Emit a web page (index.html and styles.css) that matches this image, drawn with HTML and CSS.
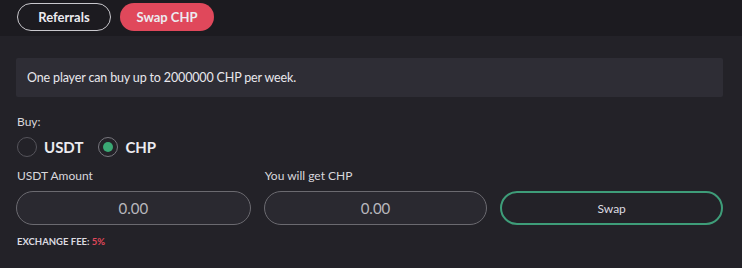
FILE: index.html
```
<!DOCTYPE html>
<html>
<head>
<meta charset="utf-8">
<link rel="stylesheet" href="styles.css">
</head>
<body>
<div class="tabs">
  <button class="tab tab-outline">Referrals</button>
  <button class="tab tab-active">Swap CHP</button>
</div>
<div class="main">
  <div class="notice">One player can buy up to 2000000 CHP per week.</div>
  <div class="buy-label">Buy:</div>
  <div class="radios">
    <label class="radio"><span class="circle"></span><span class="radio-text">USDT</span></label>
    <label class="radio"><span class="circle checked"><span class="dot"></span></span><span class="radio-text">CHP</span></label>
  </div>
  <div class="row">
    <div class="field">
      <div class="field-label">USDT Amount</div>
      <div class="input">0.00</div>
    </div>
    <div class="field">
      <div class="field-label">You will get CHP</div>
      <div class="input">0.00</div>
    </div>
    <div class="field">
      <div class="field-label">&nbsp;</div>
      <div class="swap">Swap</div>
    </div>
  </div>
  <div class="fee">EXCHANGE FEE: <span class="fee-val">5%</span></div>
</div>
</body>
</html>
```
FILE: styles.css
```
html, body {
  margin: 0;
  padding: 0;
  background: #232228;
  font-family: Lato, "Noto Sans", sans-serif;
  color: #e4e3e8;
  width: 742px;
  height: 268px;
  overflow: hidden;
}
.tabs {
  background: #1c1b20;
  height: 36px;
  box-sizing: border-box;
  padding: 3px 0 0 17px;
  display: flex;
  gap: 9px;
}
.tab {
  width: 94px;
  height: 28px;
  border-radius: 14px;
  font-family: inherit;
  font-size: 13px;
  font-weight: 700;
  color: #ecebf0;
  box-sizing: border-box;
  cursor: pointer;
}
.tab-outline {
  background: transparent;
  border: 1.5px solid #c9c8cd;
}
.tab-active {
  background: #e0485b;
  border: none;
}
.main {
  padding: 22px 19px 0 16px;
}
.notice {
  background: #2e2d35;
  height: 39px;
  border-radius: 2px;
  box-sizing: border-box;
  padding: 0 11px;
  display: flex;
  align-items: center;
  font-size: 12.5px;
  letter-spacing: -0.15px;
  color: #e8e7ec;
}
.buy-label {
  margin-top: 17px;
  padding-left: 1px;
  font-size: 12px;
  line-height: 15px;
  color: #d8d7dc;
}
.radios {
  display: flex;
  gap: 15px;
  margin-top: 8px;
  padding-left: 1px;
}
.radio {
  display: flex;
  align-items: center;
  gap: 7px;
}
.circle {
  width: 20px;
  height: 20px;
  box-sizing: border-box;
  border-radius: 50%;
  border: 1.5px solid #55545b;
  display: flex;
  align-items: center;
  justify-content: center;
}
.circle.checked {
  border-color: #77767d;
}
.dot {
  width: 10px;
  height: 10px;
  border-radius: 50%;
  background: #3aa874;
}
.radio-text {
  font-size: 15px;
  font-weight: 700;
  color: #ecebf0;
}
.row {
  display: flex;
  gap: 13px;
  margin-top: 11px;
}
.field {
  display: flex;
  flex-direction: column;
}
.field:nth-child(1) { width: 235px; }
.field:nth-child(2) { width: 224px; }
.field:nth-child(3) { width: 223px; }
.field-label {
  font-size: 12px;
  line-height: 15px;
  padding-left: 1px;
  color: #d8d7dc;
  margin-bottom: 8px;
}
.input, .swap {
  height: 34px;
  border-radius: 17px;
  box-sizing: border-box;
  display: flex;
  align-items: center;
  justify-content: center;
}
.input {
  border: 1.5px solid #6b6a70;
  background: #2a2930;
  font-size: 15px;
  color: #b8b7bd;
}
.swap {
  border: 2px solid #3e9d79;
  font-size: 12px;
  color: #dddce1;
}
.fee {
  margin-top: 11px;
  padding-left: 1px;
  font-size: 9.5px;
  font-weight: 700;
  color: #dcdbe0;
}
.fee-val {
  color: #e0485b;
}
```
